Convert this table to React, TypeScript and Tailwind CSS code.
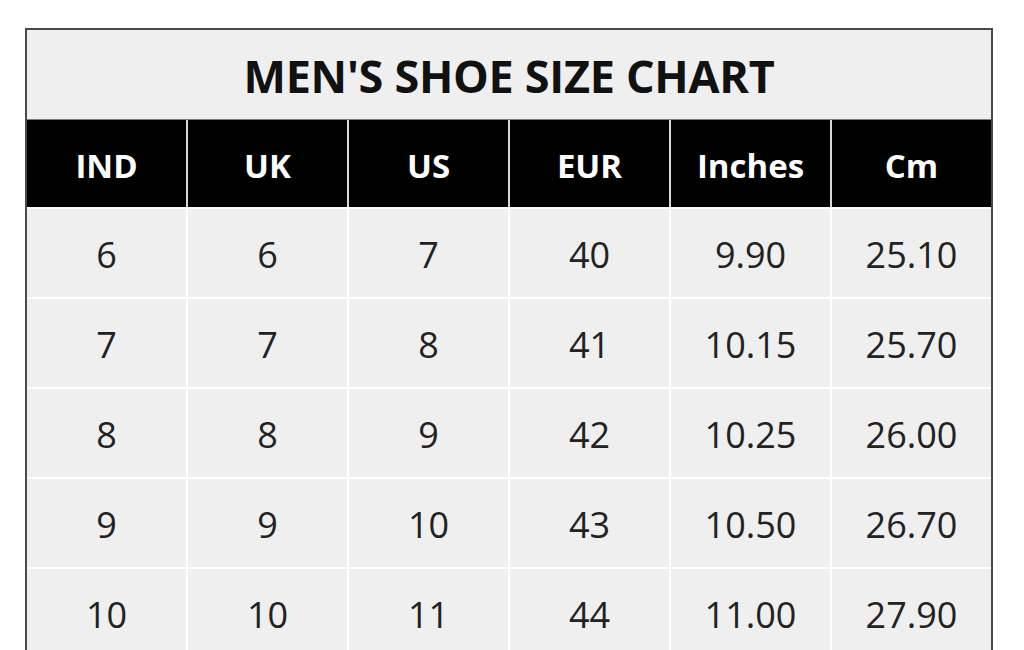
import React from "react";

const headers = ["IND", "UK", "US", "EUR", "Inches", "Cm"];
const rows = [
  ["6", "6", "7", "40", "9.90", "25.10"],
  ["7", "7", "8", "41", "10.15", "25.70"],
  ["8", "8", "9", "42", "10.25", "26.00"],
  ["9", "9", "10", "43", "10.50", "26.70"],
  ["10", "10", "11", "44", "11.00", "27.90"],
];

export default function App() {
  return (
    <div
      className="w-[1024px] h-[650px] overflow-hidden bg-white pt-[28px] pl-[25px]"
      style={{ fontFamily: '"Open Sans", "Noto Sans", sans-serif' }}
    >
      <div className="w-[968px] border-l-2 border-t-2 border-r-2 border-[#4a4a4a] bg-white">
        <div className="h-[90px] bg-[#efefef] flex items-center justify-center border-b border-[#7a7a7a] pt-[2px]">
          <span className="text-[45px] font-bold text-[#111] tracking-[-0.3px] leading-none">
            MEN'S SHOE SIZE CHART
          </span>
        </div>
        <div className="grid grid-cols-6 gap-x-[2px] bg-[#d8d8d8]">
          {headers.map((h) => (
            <div
              key={h}
              className="h-[87px] bg-black flex items-center justify-center text-white font-bold text-[33px] leading-none pt-[3px]"
            >
              {h}
            </div>
          ))}
        </div>
        <div className="grid grid-cols-6 gap-[2px] bg-white pt-[2px]">
          {rows.map((r, i) =>
            r.map((c, j) => (
              <div
                key={`${i}-${j}`}
                className="h-[88px] bg-[#efefef] flex items-center justify-center text-[#222] text-[36px] leading-none pt-[3px]"
              >
                {c}
              </div>
            ))
          )}
        </div>
      </div>
    </div>
  );
}
